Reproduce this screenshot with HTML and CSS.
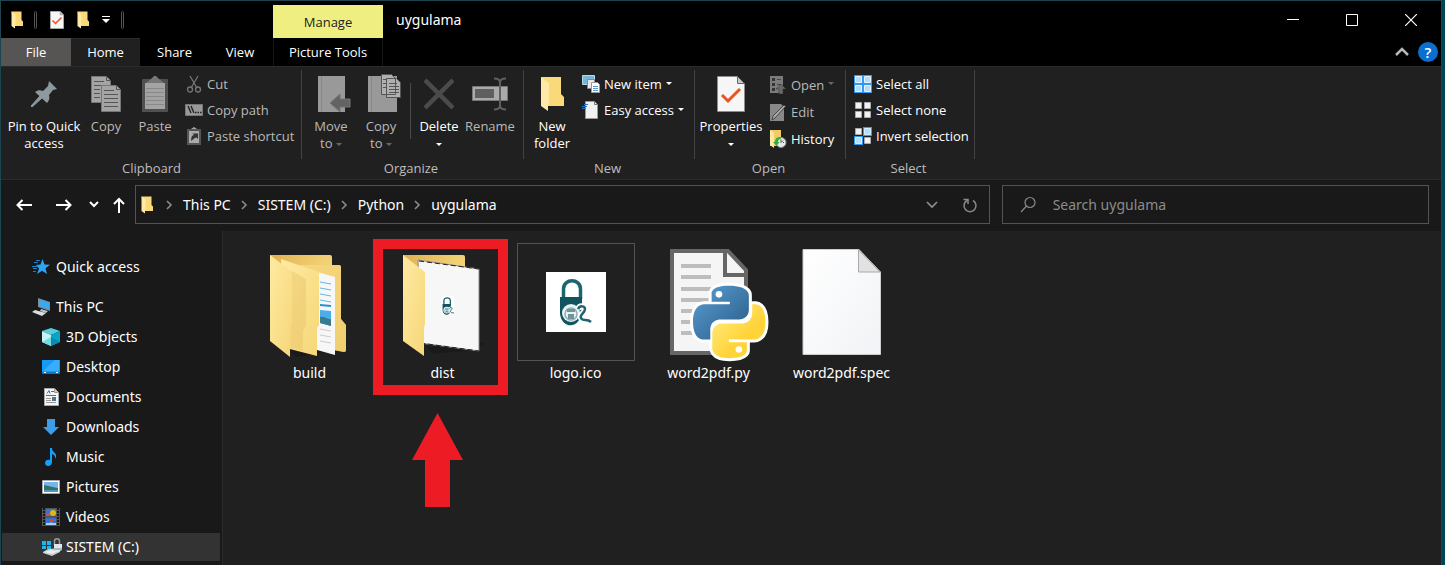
FILE: index.html
```html
<!DOCTYPE html>
<html lang="en">
<head>
<meta charset="utf-8">
<title>uygulama</title>
<link rel="stylesheet" href="styles.css">
</head>
<body>
<svg class="defs" width="0" height="0" aria-hidden="true">
  <defs>
    <linearGradient id="gf" x1="0" y1="0" x2="1" y2="1"><stop offset="0" stop-color="#ffeaa3"/><stop offset="1" stop-color="#f6d777"/></linearGradient>
    <linearGradient id="gb" x1="0" y1="0" x2="1" y2="1"><stop offset="0" stop-color="#e0b150"/><stop offset=".45" stop-color="#f0cf72"/><stop offset="1" stop-color="#ffe28b"/></linearGradient>
    <linearGradient id="gp" x1="0" y1="0" x2="1" y2="1"><stop offset="0" stop-color="#fff"/><stop offset="1" stop-color="#f1f3f6"/></linearGradient>
    <linearGradient id="gblue" x1="0" y1="0" x2="1" y2="1"><stop offset="0" stop-color="#5a9fd4"/><stop offset="1" stop-color="#285a84"/></linearGradient>
    <linearGradient id="gyel" x1="0" y1="0" x2="1" y2="1"><stop offset="0" stop-color="#fff08a"/><stop offset=".6" stop-color="#ffd43b"/><stop offset="1" stop-color="#ffd02f"/></linearGradient>
    <symbol id="folder" viewBox="0 0 24 36"><path d="M1 1h20v17l3 3v9H6z" fill="#f9d978"/><path d="M1 1l8 6v21l-1 1v6l-7-5z" fill="#ffe9a6"/></symbol>
    <symbol id="propdoc" viewBox="0 0 28 36"><path d="M.5.5h20l7 7v28H.5z" fill="#f6f6f6" stroke="#8d8d8d"/><path d="M20.500.5v7h7z" fill="#c9c9c9" stroke="#666"/><path d="M5 19l6 6L23 13" fill="none" stroke="#e9531d" stroke-width="3"/></symbol>
    <symbol id="chev" viewBox="0 0 7 10"><path d="M1 1l4 4-4 4" fill="none" stroke="#8b8b8b" stroke-width="1.600"/></symbol>
    <symbol id="lock" viewBox="0 0 60 60"><path fill="#fff" d="M0 0h60v60H0z"/><path d="M17.500 27V17c0-11 17-11 17 0v10" fill="none" stroke="#1c6670" stroke-width="3.500"/><path d="M14 25h22v11c0 22-20 22-22 6z" fill="#11545f"/><circle cx="25" cy="41" r="9" fill="#e8f0f1"/><circle cx="25" cy="42" r="6" fill="none" stroke="#8fb0b5" stroke-width="1.500"/><path d="M21 37h8v3h-8zM22 42h6v5h-6z" fill="#6d969c"/><path d="M32 37c2-4 7-3 7 0 0 4-6 6-4 9 2 4 6 0 10 4" fill="none" stroke="#fff" stroke-width="6"/><path d="M32 37c2-4 7-3 7 0 0 4-6 6-4 9 2 4 6 0 10 4" fill="none" stroke="#1f6570" stroke-width="2.500"/></symbol>
  </defs>
</svg>
<div class="window">
  <header>
    <div class="titlebar">
      <div class="quickbar">
        <svg class="q-folder" viewBox="0 0 24 36"><use href="#folder"/></svg>
        <i class="grip"></i>
        <button class="plain" aria-label="Properties"><svg width="14" height="18" viewBox="0 0 28 36"><use href="#propdoc"/></svg></button>
        <button class="plain" aria-label="New folder"><svg width="12" height="18" viewBox="0 0 24 36"><use href="#folder"/></svg></button>
        <button class="plain" aria-label="Customize toolbar"><svg width="8" height="8" viewBox="0 0 8 8"><path d="M0 .5h8" stroke="#fff"/><path d="M0 3h8L4 7z" fill="#fff"/></svg></button>
        <i class="grip"></i>
      </div>
      <div class="manage">Manage</div>
      <h1>uygulama</h1>
      <div class="controls">
        <button aria-label="Minimize"><svg width="12" height="12"><path d="M0 5.500h12" stroke="#fff"/></svg></button>
        <button aria-label="Maximize"><svg width="12" height="12"><path d="M.5.5h11v11H.5z" fill="none" stroke="#fff"/></svg></button>
        <button aria-label="Close"><svg width="12" height="12"><path d="M0 0l12 12M12 0L0 12" stroke="#fff" stroke-width="1.200"/></svg></button>
      </div>
    </div>
    <nav class="tabs">
      <button class="tab file">File</button><button class="tab home">Home</button><button class="tab share">Share</button><button class="tab view">View</button><button class="tab tools">Picture Tools</button>
      <div class="tab-end">
        <button class="plain" aria-label="Collapse ribbon"><svg width="14" height="10"><path d="M1 8l6-6 6 6" fill="none" stroke="#b8b8b8" stroke-width="2.500"/></svg></button>
        <button class="help" aria-label="Help">?</button>
      </div>
    </nav>
  </header>

  <section class="ribbon">
    <div class="group clipboard">
      <div class="tools-row">
        <button class="big w-pin"><svg width="28" height="36" viewBox="0 0 28 36"><g fill="#8d989f"><path d="M19 5l8 8-4 1-4 5c1 3 0 6-2 8L5 16c3-2 5-2 8-1l5-5z"/><path d="M10 20l2 2L2 31l-1-1z" stroke="#8d989f"/></g></svg><span>Pin to Quick<br>access</span></button>
        <button class="big dim w-copy"><svg width="30" height="36" viewBox="0 0 30 36"><g fill="#a4a4a4" stroke="#777"><path d="M.5.5h15l4 4v22H.5z"/><path d="M10.500 9.500h15l4 4v22h-19z"/></g><path d="M15.500.5v4h4M25.500 9.500v4h4M3 5.500h10M3 9.500h7M3 13.500h6M3 17.500h6M3 21.500h6M13 14.500h10M13 18.500h14M13 22.500h14M13 26.500h14M13 30.500h14" stroke="#555" fill="none"/></svg><span>Copy</span></button>
        <button class="big dim w-paste"><svg width="26" height="36" viewBox="0 0 26 36"><rect y="3" width="26" height="33" rx="1" fill="#505050"/><path d="M3 7h20v26H3z" fill="#a3a3a3"/><path d="M4 12.500h18M4 16.500h18M4 20.500h18M4 24.500h18M4 28.500h18" stroke="#888"/><path d="M4 7l5-4 3-3h2l3 3 5 4z" fill="#777"/></svg><span>Paste</span></button>
        <div class="stack">
          <button class="small dim"><svg width="18" height="18" viewBox="0 0 18 18" fill="none" stroke="#747474" stroke-width="1.300"><path d="M5 1l7 12M13 1L6 13"/><circle cx="5" cy="14.500" r="2.500"/><circle cx="13" cy="14.500" r="2.500"/></svg>Cut</button>
          <button class="small dim"><svg width="18" height="12" viewBox="0 0 18 12"><path d="M.5.5h17v11H.5z" fill="#999" stroke="#777"/><path d="M3 2l3 7M6 2l3 7M10 8.500h1.500M12.500 8.500H14M15 8.500h1.500" stroke="#222" stroke-width="1.400"/></svg>Copy path</button>
          <button class="small dim"><svg width="18" height="18" viewBox="0 0 18 18"><path d="M2 2h14v16H2z" fill="#555"/><path d="M4 4h10v12H4zM6 2l3-2 3 2z" fill="#aaa"/><path d="M6 14c0-4 1-6 3-6L7.500 6.500H13V12l-1.500-1.500C9 11 8 13 6 14z" fill="#333"/></svg>Paste shortcut</button>
        </div>
      </div>
      <h2>Clipboard</h2>
    </div>
    <div class="group organize">
      <div class="tools-row">
        <button class="big dim w-50"><svg width="40" height="36" viewBox="-6 0 40 36"><path d="M1 0h27v36H1z" fill="#999"/><path d="M4.500 0v36" stroke="#888"/><path d="M13 27l10-9v5h10v8H23v5z" fill="#636363" stroke="#777"/></svg><span>Move<br>to <i class="arr"></i></span></button>
        <button class="big dim w-50"><svg class="tall" width="40" height="38" viewBox="-6 0 40 38"><path d="M1 2h29v36H1z" fill="#999"/><path d="M4.500 2v36" stroke="#888"/><path d="M14.500.5h10l4 4v16h-14zM19.500 4.500h10l4 4v15h-14z" fill="#b0b0b0" stroke="#555"/><path d="M16 5.500h3M16 9.500h3M16 13.500h3M22 9.500h8M22 12.500h10M22 15.500h10M22 18.500h10" stroke="#555"/></svg><span>Copy<br>to <i class="arr"></i></span></button>
        <i class="rule"></i>
        <button class="big w-50"><svg width="30" height="36" viewBox="0 0 30 36"><path d="M1 4l28 28M29 4L1 32" stroke="#4b4b4b" stroke-width="4.500"/></svg><span>Delete<br><i class="arr"></i></span></button>
        <button class="big dim w-rename"><svg width="36" height="36" viewBox="0 0 36 36"><path d="M.5 10.500h35v14H.5z" fill="#aaa" stroke="#777"/><path d="M3 13h19v9H3z" fill="#5f5f5f"/><path d="M22 2.500c4 0 6 1 6 4v23c0 3-2 4-6 4M34 2.500c-4 0-6 1-6 4v23c0 3 2 4 6 4" fill="none" stroke="#5f5f5f" stroke-width="2"/></svg><span>Rename</span></button>
      </div>
      <h2>Organize</h2>
    </div>
    <div class="group new">
      <div class="tools-row">
        <button class="big w-50"><svg width="24" height="36" viewBox="0 0 24 36"><use href="#folder"/></svg><span>New<br>folder</span></button>
        <div class="stack">
          <button class="small"><svg width="18" height="18" viewBox="0 0 18 18"><path d="M.5.500h12v9H.5z" fill="#75b7d8" stroke="#b8d8e8"/><path d="M5.500 4.500h7v9h-7z" fill="#e8e8e8" stroke="#888"/><path d="M9.500 7.500h6l2 2v8h-8z" fill="#fff" stroke="#999"/><path d="M11 11.500h5M11 13.500h5M11 15.500h5" stroke="#5b9dd8"/></svg>New item <i class="arr"></i></button>
          <button class="small"><svg width="18" height="18" viewBox="0 0 18 18"><path d="M3.500.5h9l3 3v14h-12z" fill="#f2f2f2" stroke="#999"/><path d="M12.500.5v3h3" fill="none" stroke="#777"/><path d="M2 3.500h4M0 5.500h5M0 7.500h4" stroke="#2377c9"/></svg>Easy access <i class="arr"></i></button>
        </div>
      </div>
      <h2>New</h2>
    </div>
    <div class="group open">
      <div class="tools-row">
        <button class="big w-prop"><svg width="28" height="36" viewBox="0 0 28 36"><use href="#propdoc"/></svg><span>Properties<br><i class="arr"></i></span></button>
        <div class="stack loose">
          <button class="small dim"><svg width="18" height="18" viewBox="0 0 18 18"><path d="M1 0h13v17H1z" fill="#7b7b7b"/><path d="M3 2h3v3H3zM3 7h3v3H3zM3 12h3v3H3z" fill="#333"/><path d="M8 3.500h4M8 8.500h4" stroke="#444"/><path d="M12 8l5 5h-3v5h-4v-5H7z" fill="#686868" stroke="#333" stroke-width=".5"/></svg>Open <i class="arr"></i></button>
          <button class="small dim"><svg width="18" height="18" viewBox="0 0 18 18"><path d="M1 1h11l3 3v14H1z" fill="#888"/><path d="M15 2l1.500 1.500L6 15l-3 2 1-4z" fill="#aaa" stroke="#444"/></svg>Edit</button>
          <button class="small"><svg width="18" height="18" viewBox="0 0 18 18"><path d="M1 0h11v16H1z" fill="#f2cc63"/><path d="M1 0l4 3v15l-4-3z" fill="#ffe9a6"/><circle cx="12" cy="12.500" r="5" fill="#e8e8e8" stroke="#888"/><path d="M12 9.500v3l2-2M9 12.500h1M15 12.500h-1" stroke="#555" fill="none"/><path d="M11 7c-4 0-5 3-5 5H4l3.500 4 3-4H9c0-2 1-3 3-3z" fill="#2fae3b"/></svg>History</button>
        </div>
      </div>
      <h2>Open</h2>
    </div>
    <div class="group select">
      <div class="tools-row">
        <div class="stack">
          <button class="small"><svg width="18" height="18"><path fill="#3698ea" d="M0 0h18v18H0z"/><path fill="#b5dcfb" stroke="#e3f3ff" d="M1.500 1.500h6v6h-6zM10.500 1.500h6v6h-6zM1.500 10.500h6v6h-6zM10.500 10.500h6v6h-6z"/></svg>Select all</button>
          <button class="small"><svg width="18" height="18"><path fill="#f2f2f2" stroke="#aaa" d="M1.500 1.500h6v6h-6zM10.500 1.500h6v6h-6zM1.500 10.500h6v6h-6zM10.500 10.500h6v6h-6z"/></svg>Select none</button>
          <button class="small"><svg width="18" height="18"><path fill="#3698ea" d="M9 0h9v9H9zM0 9h9v9H0z"/><path fill="#f2f2f2" stroke="#aaa" d="M1.500 1.500h6v6h-6zM10.500 10.500h6v6h-6z"/><path fill="#b5dcfb" stroke="#d6edff" d="M10.500 1.500h6v6h-6zM1.500 10.500h6v6h-6z"/></svg>Invert selection</button>
        </div>
      </div>
      <h2>Select</h2>
    </div>
  </section>

  <div class="navbar">
    <div class="nav-buttons">
      <button class="wide" aria-label="Back"><svg width="16" height="12"><path d="M16 6H1M6.500 1l-5 5 5 5" fill="none" stroke="#fff" stroke-width="2"/></svg></button>
      <button class="wide" aria-label="Forward"><svg width="16" height="12"><path d="M0 6h15M9.500 1l5 5-5 5" fill="none" stroke="#fff" stroke-width="2"/></svg></button>
      <button class="thin" aria-label="Recent locations"><svg width="10" height="7"><path d="M1 1l4 4 4-4" fill="none" stroke="#fff" stroke-width="2"/></svg></button>
      <button class="mid" aria-label="Up"><svg width="12" height="16"><path d="M6 16V2M1 7l5-5 5 5" fill="none" stroke="#fff" stroke-width="2"/></svg></button>
    </div>
    <div class="address">
      <svg width="12" height="18" viewBox="0 0 24 36"><use href="#folder"/></svg>
      <svg class="sep first" viewBox="0 0 7 10"><use href="#chev"/></svg><a href="#">This PC</a>
      <svg class="sep" viewBox="0 0 7 10"><use href="#chev"/></svg><a href="#">SISTEM (C:)</a>
      <svg class="sep" viewBox="0 0 7 10"><use href="#chev"/></svg><a href="#">Python</a>
      <svg class="sep" viewBox="0 0 7 10"><use href="#chev"/></svg><a href="#">uygulama</a>
      <div class="address-end">
        <button aria-label="Previous locations"><svg width="12" height="8"><path d="M1 1l5 5 5-5" fill="none" stroke="#919191" stroke-width="1.600"/></svg></button>
        <button aria-label="Refresh"><svg width="16" height="16"><path d="M11 3.500A6 6 0 1 1 5 3.500M1.500 2.500H6V7" fill="none" stroke="#8a8a8a" stroke-width="1.500"/></svg></button>
      </div>
    </div>
    <label class="search"><svg width="18" height="18"><circle cx="11" cy="6.500" r="5" fill="none" stroke="#8a8a8a" stroke-width="1.200"/><path d="M7.500 10L2 16" stroke="#8a8a8a" stroke-width="1.200"/></svg><input type="text" placeholder="Search uygulama" aria-label="Search uygulama"></label>
  </div>

  <div class="content">
    <nav class="sidebar">
      <a class="root quick" href="#"><svg width="18" height="18" viewBox="0 0 18 18"><path d="M10.500 1l2 5.500 5.500.2-4.500 3.500L15 16l-5-3.300L5 16l2-5.500L4 7l4.500-.5z" fill="#2ba4f5"/><path d="M4 2.500h4M2 4.500h4M0 8.500h5M1 10.500h4M1 13.500h3" stroke="#247fc0"/></svg>Quick access</a>
      <a class="root" href="#"><svg width="18" height="18" viewBox="0 0 18 18"><path d="M6 0l12 4v9L6 9z" fill="#7d8b95"/><path d="M7 1.500l10 3.300v6.500L7 8z" fill="#38a9f5"/><path d="M9 11l7 2-2 2-6-2z" fill="#bac2c8"/><path d="M0 14l3-2 11 3-4 3z" fill="#d7dde1"/></svg>This PC</a>
      <a href="#"><svg width="18" height="18" viewBox="0 0 18 18"><path d="M0 3l9-3 9 3-9 4z" fill="#53cfe0"/><path d="M0 3l9 4v11l-9-4z" fill="#c8f1f4"/><path d="M18 3L9 7v11l9-4z" fill="#07a6c8"/><path d="M9 9l9 5-9 4z" fill="#0d8bad"/><path d="M9 9l-9 5 9 4z" fill="#72dce4"/></svg>3D Objects</a>
      <a href="#"><svg width="18" height="18" viewBox="0 0 18 18"><path d="M0 2h18v14H0z" fill="#159bf7"/><path d="M1 13l12-11h4v11z" fill="#38adfb"/><path d="M0 14h18v2H0z" fill="#007bd1"/><path d="M2 14.500h2M14 14.500h2" stroke="#fff"/></svg>Desktop</a>
      <a href="#"><svg width="18" height="18" viewBox="0 0 18 18"><path d="M2.500.5h10l4 4v13h-14z" fill="#f5f5f5" stroke="#aaa"/><path d="M12.500.5v4h4" fill="#ccc" stroke="#999"/><path d="M5 5.500l2-3 1 3M9 3.500h3M4 7.500h10" stroke="#1b7bcc" fill="none"/><path d="M4 10.500h5M4 12.500h5M4 14.500h10" stroke="#999"/><path d="M10 9h4v4h-4z" fill="#4a788f"/></svg>Documents</a>
      <a href="#"><svg width="18" height="18" viewBox="0 0 18 18"><path d="M5 1h8v8h4l-8 8-8-8h4z" fill="#3c9deb"/></svg>Downloads</a>
      <a href="#"><svg width="18" height="18" viewBox="0 0 18 18"><path d="M8 0h2c0 5 5 4 4 9-1 2-1 2-1 2 1-4-3-5-3-5v8c0 5-7 5-7 1 0-3 3-4 5-3z" fill="#12a0ff"/></svg>Music</a>
      <a href="#"><svg width="18" height="18" viewBox="0 0 18 18"><path d="M.5 2.500h17v13H.5z" fill="#fff" stroke="#aaa"/><path d="M2 4h14v10H2z" fill="#75b6ed"/><path d="M2 7c6 1 8 2 14 3v4H2z" fill="#347266"/><path d="M2 12h14v2H2z" fill="#4f9aba"/></svg>Pictures</a>
      <a href="#"><svg width="18" height="18" viewBox="0 0 18 18"><path d="M0 0h18v18H0z" fill="#555"/><path d="M2 0v18M16 0v18" stroke="#171717" stroke-width="2" stroke-dasharray="2 1"/><path d="M4 1h10v7H4zM4 10h10v7H4z" fill="#3771d8"/><path d="M4 5h4v3H4z" fill="#d44b42"/><circle cx="11" cy="5" r="3" fill="#d9b91d"/><path d="M8 11h4v2H8z" fill="#d7443a"/><path d="M4 15h4l1-1 1 1h4v2H4z" fill="#a7d2ef"/></svg>Videos</a>
      <a class="current" href="#"><svg width="20" height="18" viewBox="0 0 20 18"><path d="M0 3h4v4H0zM5 3h4v4H5zM0 8h4v3H0zM5 8h4v3H5z" fill="#19b8ef"/><path d="M1 14l5-3 12-1v4l-8 4-9-3z" fill="#c9cccd"/><path d="M2 14l8 2 7-3-8-1z" fill="#eee"/><path d="M12.500 7V3c0-3 5-3 5 0v3" fill="none" stroke="#999" stroke-width="1.500"/><path d="M12 6h8v6l-4 2-4-2z" fill="#dce7ee"/><path d="M12 10h8v2h-8z" fill="#a9b9c2"/></svg>SISTEM (C:)</a>
    </nav>
    <main class="files">
      <button class="item"><span class="art"><svg width="90" height="110" viewBox="-1 -4 90 110">
        <path d="M20 99l64-7-13 7-40 7z" fill="#1a1a1a"/><path d="M4 4h60q2 0 2 2v83H4z" fill="url(#gb)"/><path d="M30 14h43q2 0 2 2v52l5 6v25q0 2-2 2l-48-9z" fill="url(#gf)"/><path d="M30 14h43q2 0 2 2v52l5 6v25q0 2-2 2l-48-9z" fill="#edc866" opacity=".55"/><path d="M51 21l18 5v78l-18-5z" fill="#f7f7f7"/><path d="M54 31l11 2M54 37l11 2M54 43l11 2M54 49l11 2" stroke="#61b9e7"/><path d="M54 54l11 1" stroke="#2492d2" stroke-width="2"/><path d="M54 59l11 1v15l-11-3z" fill="#4aaeea"/><path d="M54 66c5-1 8 3 11 2v7l-11-3z" fill="#397a8d"/><path d="M54 78l11 2M54 84l11 2M54 90l11 2" stroke="#ccc"/><path d="M15 8l38 13v53l-2 3v28L20 97z" fill="url(#gf)"/><path d="M26 20l14 8v46l-3 6v20l-13-3z" fill="#e7c366" opacity=".45"/><path d="M4 4l22 17v51l-2 5v29L4 90z" fill="url(#gf)"/></svg></span><span>build</span></button>
      <button class="item"><span class="art"><svg width="90" height="110" viewBox="-1 -4 90 110"><path d="M28 96l58-4-10 7-43 4z" fill="#1a1a1a"/><path d="M4 4h60q2 0 2 2v80H4z" fill="url(#gb)"/><path d="M19 9l61 9v82l-59-8z" fill="#f7f7f7" stroke="#888"/><path d="M20 10l60 8M21 92l59 8" stroke="#222" stroke-dasharray="5 3"/><svg x="42" y="45" width="13" height="19" viewBox="10 4 34 50"><use href="#lock" width="60" height="60"/></svg><path d="M4 4l22 17v52l-1 4v28L4 90z" fill="url(#gf)"/></svg></span><span>dist</span>
        <span class="annotation"><i class="frame"></i><svg class="pointer" width="51" height="94" viewBox="0 0 51 94"><path d="M25.500 0L51 47H38v47H13V47H0z" fill="#ed1c24"/></svg></span></button>
      <button class="item"><span class="art framed"><svg width="60" height="60" viewBox="0 0 60 60"><use href="#lock"/></svg></span><span>logo.ico</span></button>
      <button class="item"><span class="art"><svg class="python" width="78" height="106" viewBox="0 0 78 106"><path d="M2 2h56l18 19v83H2z" fill="#f5f5f5" stroke="#666" stroke-width="4"/><path d="M55 2v24h21" fill="#f5f5f5" stroke="#666" stroke-width="4"/><path d="M11 17h30M11 28h30M11 40h30M11 51h30M11 62h30M11 73h30M11 84h30" stroke="#bdbdbd" stroke-width="4"/>
        <g transform="translate(23 36) scale(.665)"><path d="M54 1C26 1 28 13 28 13v12h27v4H18S0 27 0 55s15 27 15 27h11V68s-1-16 16-16h27s15 0 15-15V16S86 1 54 1z" fill="#fff" stroke="#fff" stroke-width="9" stroke-linejoin="round"/><path d="M55 110c28 0 26-12 26-12V86H54v-4h37s18 2 18-26-15-27-15-27H87v13s1 16-16 16H44s-15 0-15 15v21s-2 16 26 16z" fill="#fff" stroke="#fff" stroke-width="9" stroke-linejoin="round"/><path d="M54 1C26 1 28 13 28 13v12h27v4H18S0 27 0 55s15 27 15 27h11V68s-1-16 16-16h27s15 0 15-15V16S86 1 54 1z" fill="url(#gblue)"/><path d="M55 110c28 0 26-12 26-12V86H54v-4h37s18 2 18-26-15-27-15-27h-5v13s1 16-18 16H44s-15 0-15 15v21s-2 16 26 16z" fill="url(#gyel)"/><path d="M28 27h27M54 84h27" stroke="#fff" stroke-width="3"/><circle cx="39" cy="14" r="5" fill="#fff"/><circle cx="69" cy="97" r="5" fill="#fff"/></g></svg></span><span>word2pdf.py</span></button>
      <button class="item"><span class="art"><svg width="80" height="106" viewBox="0 0 80 106"><path d="M1 .5h56L78.500 23v82.500H1z" fill="url(#gp)" stroke="#ccc"/><path d="M56.500 1v22H78z" fill="#e2e2e2" stroke="#aaa"/></svg></span><span>word2pdf.spec</span></button>
    </main>
  </div>
</div>
</body>
</html>
```

FILE: styles.css
```css
* { box-sizing: border-box; }
body { margin: 0; background: #004556; color: #fff; font: 13px/16px "Open Sans", "Noto Sans", sans-serif; }
button { font: inherit; color: inherit; background: none; border: 0; padding: 0; margin: 0; }
a { color: inherit; text-decoration: none; }
svg { display: block; flex: none; }
h1, h2 { margin: 0; font-weight: 400; }
.defs { position: absolute; }
.window { min-height: 100vh; margin-right: 3px; border: 1px solid #1d454f; border-bottom: 0; display: flex; flex-direction: column; background: #191919; }

.titlebar { display: flex; height: 37px; background: #000; }
.quickbar { width: 272px; display: flex; align-items: center; padding-left: 10px; }
.q-folder { width: 12px; height: 18px; }
.grip { width: 3px; height: 18px; border: 1px solid #555; border-radius: 2px; margin-left: 11px; }
.plain { display: flex; align-items: center; }
.quickbar .plain { margin-left: 13px; }
.manage { width: 110px; margin-top: 4px; background: #efee80; color: #222; display: grid; place-items: center; }
h1 { font: 14px/37px "Noto Sans", sans-serif; margin-left: 13px; }
.controls { margin-left: auto; display: flex; padding-right: 1px; }
.controls button { width: 59px; display: grid; place-items: center; }

.tabs { display: flex; height: 28px; background: #000; }
.tab { text-align: center; }
.file { width: 70px; background: #565553; }
.home { width: 69px; background: #202020; box-shadow: inset 0 1px #2b2b2b; }
.share { width: 69px; }
.view { width: 62px; margin-right: 2px; }
.tools { width: 110px; border: 1px solid #161616; border-width: 0 1px; }
.tab-end { margin-left: auto; display: flex; align-items: center; gap: 9px; padding-right: 3px; }
.help { width: 20px; height: 20px; border-radius: 50%; background: #0a6fd0; font-size: 15px; font-weight: 600; }

.ribbon { display: flex; background: #202020; border: 1px solid #2b2b2b; border-width: 1px 0; height: 114px; }
.group { display: flex; flex-direction: column; background: linear-gradient(#424242, #424242) right 3px / 1px 89px no-repeat; }
.clipboard { width: 301px; }
.organize { width: 222px; }
.new { width: 171px; }
.open { width: 151px; }
.select { width: 129px; }
.tools-row { display: flex; height: 93px; }
h2 { font-size: 13px; text-align: center; color: #bdbdbd; padding-right: 4px; }
.clipboard h2 { padding-right: 0; }
.big { display: flex; flex-direction: column; align-items: center; padding-top: 9px; gap: 6px; line-height: 17px; white-space: nowrap; }
.tall { margin-top: -2px; }
.w-pin { width: 86px; }
.w-copy { width: 38px; }
.w-paste { width: 60px; }
.w-50 { width: 50px; }
.w-rename { width: 52px; }
.w-prop { width: 72px; }
.dim { color: #b9b9b9; }
.stack { display: flex; flex-direction: column; padding-top: 4px; }
.small { display: flex; align-items: center; gap: 4px; height: 26px; white-space: nowrap; }
.loose .small { height: 27px; }
.arr { display: inline-block; border: 3px solid transparent; border-top-color: #fff; border-bottom: 0; vertical-align: middle; }
.small .arr { margin-bottom: 2px; }
.dim .arr { border-top-color: #666; }
.organize .tools-row { padding-left: 4px; }
.rule { width: 1px; height: 56px; margin: 16px 3px 0 4px; background: #4a4a4a; }
.new .tools-row { padding-left: 3px; }
.new .stack { padding-left: 5px; }
.open .stack { padding-left: 2px; }
.select .tools-row { padding-left: 8px; }

.navbar { display: grid; grid-template-columns: 134px minmax(0, 2fr) 12px minmax(0, 1fr); height: 51px; padding: 5px 12px 7px 0; font: 14px/20px "Noto Sans", sans-serif; }
.nav-buttons { display: flex; padding-left: 3px; }
.nav-buttons button, .address-end button { display: grid; place-items: center; }
.wide { width: 40px; }
.thin { width: 20px; }
.mid { width: 30px; }
.address { display: flex; align-items: center; border: 1px solid #535353; padding-left: 5px; }
.sep { width: 7px; height: 10px; margin: 0 10px; }
.first { margin-left: 13px; }
.address-end { margin-left: auto; display: flex; align-self: stretch; }
.address-end button { width: 38px; }
.search { grid-column: 4; display: flex; align-items: center; gap: 16px; padding: 0 16px; border: 1px solid #535353; }
.search input { flex: 1; min-width: 0; height: 24px; background: none; border: 0; padding: 0; color: #fff; font: inherit; outline: 0; }
.search input::placeholder { color: #8c8c8c; opacity: 1; }

.content { flex: 1; display: flex; font: 14px/20px "Noto Sans", sans-serif; }
.sidebar { width: 222px; padding: 22px 2px 3px 1px; border-right: 1px solid #2b2b2b; display: flex; flex-direction: column; gap: 2px; flex: none; }
.sidebar a { display: flex; align-items: center; gap: 6px; height: 28px; padding-left: 40px; }
.sidebar .root { padding-left: 30px; }
.sidebar .quick { margin-bottom: 10px; }
.sidebar .current { background: #333; gap: 4px; }
.files { flex: 1; display: flex; align-items: flex-start; padding: 12px 0 0 20px; background: #202020; }
.item { width: 133px; display: flex; flex-direction: column; align-items: center; gap: 2px; position: relative; line-height: 20px; }
.art { width: 118px; height: 118px; display: grid; place-items: center; }
.python { overflow: visible; }
.framed { border: 1px solid #535353; }
.annotation { position: absolute; top: -4px; left: -3px; display: flex; flex-direction: column; gap: 18px; }
.frame { width: 135px; height: 156px; border: 10px solid #ed1c24; }
.pointer { margin-left: 39px; }
```
